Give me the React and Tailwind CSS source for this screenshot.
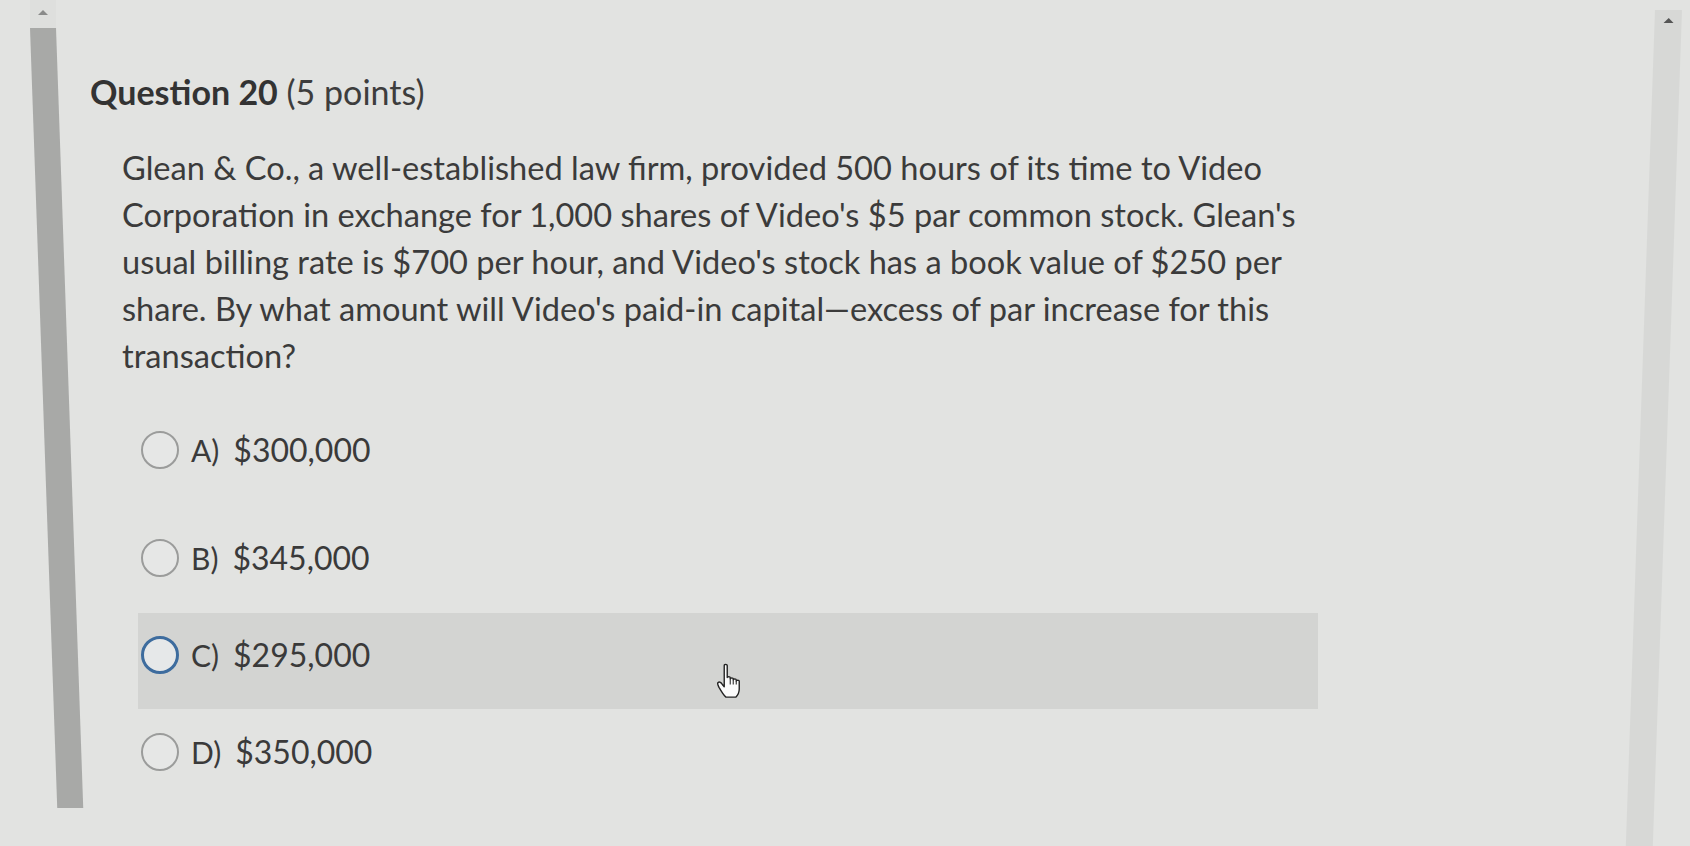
import React from "react";

const font = { fontFamily: "Lato, 'Noto Sans', sans-serif" };

function Radio({ active }) {
  return (
    <span
      className={
        "block h-[38px] w-[38px] shrink-0 rounded-full " +
        (active
          ? "border-[3px] border-[#3d6c9e] bg-[#e6e8e9]"
          : "border-2 border-[#9b9c9b] bg-[#e6e7e6]")
      }
    />
  );
}

function Hand() {
  return (
    <svg width="30" height="38" viewBox="0 0 26 32" className="block">
      <path
        d="M8 2.5c0-1.2 2.6-1.2 2.6 0V13c0-1 2.6-1 2.6 0v1c0-1 2.6-1 2.6 0v1c0-1 2.6-1 2.6 0v1c0-1 2.6-1 2.6 0v7c0 3-1.4 5.5-3 7H9.5C7.5 28.5 5.5 25 3.5 21.5 2.5 19.5 1.5 18 2.8 17.2c1.2-.8 2.6.3 3.4 1.6L8 21V2.5z"
        fill="#fbfbfb"
        stroke="#222"
        strokeWidth="1.2"
        strokeLinejoin="round"
      />
      <path d="M13.2 14v5M15.8 15v4M18.4 16v3" stroke="#222" strokeWidth="0.9" />
    </svg>
  );
}

function Option({ letter, value, active, rowClass }) {
  return (
    <div
      className={
        "flex items-center pl-[3px] " +
        rowClass +
        (active ? " bg-[#d3d4d2]" : "")
      }
    >
      <Radio active={active} />
      <span className="ml-[12px] text-[30px] text-[#3a3a3a]">{letter})</span>
      <span className="ml-[14px] text-[32px] text-[#3a3a3a]">{value}</span>
      {active && (
        <span className="ml-[345px] mt-[52px]">
          <Hand />
        </span>
      )}
    </div>
  );
}

export default function App() {
  return (
    <div
      className="flex h-[846px] w-[1690px] overflow-hidden bg-[#e2e3e1]"
      style={font}
    >
      {/* left scrollbar */}
      <div className="ml-[30px] flex w-[26px] shrink-0 flex-col">
        <div className="flex h-[28px] items-start justify-center bg-[#dedfdd] pt-[10px]">
          <span className="block h-0 w-0 border-x-[5px] border-b-[5px] border-x-transparent border-b-[#8a8b8a]" />
        </div>
        <div className="h-[780px] skew-x-2 bg-[#a8a9a7] origin-top" />
      </div>

      {/* content */}
      <div className="flex min-w-0 flex-1 flex-col pt-[72px]">
        <h1 className="ml-[34px] text-[34px] leading-[40px] text-[#333]">
          <span className="font-bold">Question 20</span>{" "}
          <span className="font-normal text-[#3d3d3d]">(5 points)</span>
        </h1>
        <p className="ml-[66px] mt-[32px] w-[1240px] text-[32.6px] leading-[47px] text-[#3b3b3b]">
          Glean &amp; Co., a well-established law firm, provided 500 hours of its
          time to Video
          <br />
          Corporation in exchange for 1,000 shares of Video's $5 par common
          stock. Glean's
          <br />
          usual billing rate is $700 per hour, and Video's stock has a book value
          of $250 per
          <br />
          share. By what amount will Video's paid-in capital—excess of par
          increase for this
          <br />
          transaction?
        </p>
        <div className="ml-[82px] mt-[18px] flex w-[1180px] flex-col">
          <Option letter="A" value="$300,000" rowClass="h-[106px]" />
          <Option letter="B" value="$345,000" rowClass="h-[110px]" />
          <Option letter="C" value="$295,000" rowClass="h-[96px] pb-[12px]" active />
          <Option letter="D" value="$350,000" rowClass="h-[86px]" />
        </div>
      </div>

      {/* right scrollbar */}
      <div className="mr-[8px] flex w-[27px] shrink-0 flex-col pt-[10px]">
        <div className="flex h-full flex-col items-center -skew-x-2 origin-top bg-[#d7d8d6]">
          <span className="mt-[8px] block h-0 w-0 border-x-[5px] border-b-[5px] border-x-transparent border-b-[#555]" />
        </div>
      </div>
    </div>
  );
}
